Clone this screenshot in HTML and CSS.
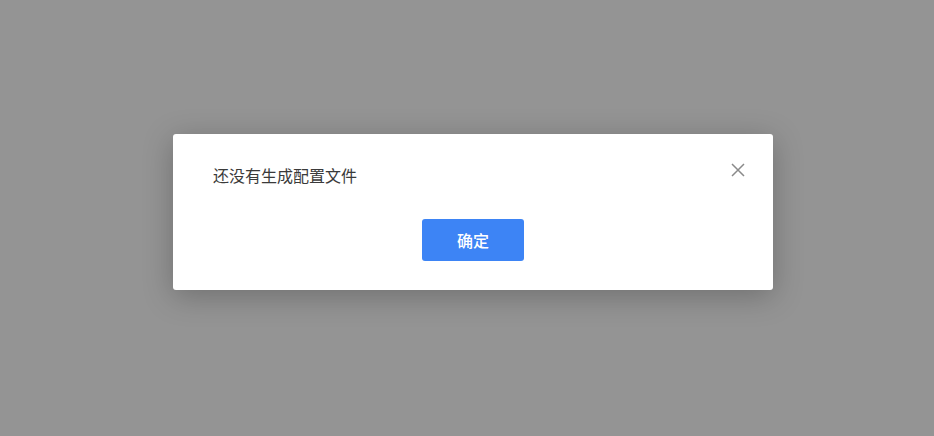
FILE: index.html
```html
<!DOCTYPE html>
<html lang="zh-CN">

<head>
    <meta charset="UTF-8">
    <meta name="viewport" content="width=device-width, initial-scale=1.0">
    <title>提示</title>
    <link rel="stylesheet" href="styles.css">
</head>

<body>
    <div class="mask">
        <div class="dialog">
            <button type="button" class="close" aria-label="关闭">
                <svg width="14" height="14" viewBox="0 0 14 14">
                    <path d="M1 1L13 13M13 1L1 13" stroke="#8a8a8a" stroke-width="1.5" fill="none" />
                </svg>
            </button>
            <p class="message">还没有生成配置文件</p>
            <div class="footer">
                <button type="button" class="ok">确定</button>
            </div>
        </div>
    </div>
</body>

</html>
```

FILE: styles.css
```css
html,
body {
    margin: 0;
    height: 100%;
}

body {
    background-color: #949494;
    font-family: "Noto Sans CJK SC", "Noto Sans", sans-serif;
}

.mask {
    height: 100%;
    display: flex;
    justify-content: center;
    padding: 134px 0 0 12px;
    box-sizing: border-box;
}

.dialog {
    position: relative;
    width: 600px;
    height: 156px;
    box-sizing: border-box;
    padding: 29px 40px 0;
    background-color: #fff;
    border-radius: 3px;
    box-shadow: 0 6px 30px rgba(0, 0, 0, 0.25);
}

.message {
    margin: 0;
    font-size: 16px;
    line-height: 24px;
    color: #3a3a3a;
}

.footer {
    margin-top: 32px;
    display: flex;
    justify-content: center;
}

.ok {
    width: 102px;
    height: 42px;
    border: none;
    border-radius: 3px;
    background-color: #3d84f5;
    color: #fff;
    font-family: inherit;
    font-size: 16px;
    font-weight: 500;
    cursor: pointer;
}

.close {
    position: absolute;
    top: 27px;
    right: 26px;
    width: 18px;
    height: 18px;
    padding: 2px;
    border: none;
    background: none;
    cursor: pointer;
    line-height: 0;
}
```
